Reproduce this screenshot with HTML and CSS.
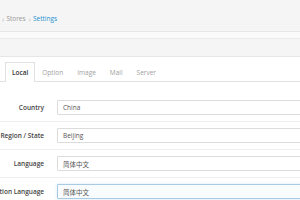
FILE: index.html
```html
<!DOCTYPE html>
<html lang="en">
<head>
    <meta charset="UTF-8">
    <title>Settings</title>
    <link rel="stylesheet" href="styles.css">
</head>
<body>
    <div class="page-header">
        <ul class="breadcrumb">
            <li><span class="sep">›</span><a href="#">Stores</a></li>
            <li><span class="sep">›</span><a href="#" class="current">Settings</a></li>
        </ul>
    </div>
    <div class="spacer"></div>
    <div class="panel-heading"></div>

    <div class="panel-body">
        <ul class="nav-tabs">
            <li class="active"><a href="#">Local</a></li>
            <li><a href="#">Option</a></li>
            <li><a href="#">Image</a></li>
            <li><a href="#">Mail</a></li>
            <li><a href="#">Server</a></li>
        </ul>

        <div class="tab-content">
            <div class="form-group">
                <div class="label"><span>Country</span></div>
                <input class="form-control" type="text" value="China">
            </div>
            <div class="form-group">
                <div class="label"><span>Region / State</span></div>
                <input class="form-control" type="text" value="Beijing">
            </div>
            <div class="form-group">
                <div class="label"><span>Language</span></div>
                <input class="form-control" type="text" value="简体中文">
            </div>
            <div class="form-group">
                <div class="label"><span>Administration Language</span></div>
                <input class="form-control focus" type="text" value="简体中文">
            </div>
        </div>
    </div>
</body>
</html>
```

FILE: styles.css
```css
/* General Styles */
body {
    font-family: "Open Sans", "Noto Sans CJK SC", sans-serif;
    font-size: 6.5px;
    margin: 0;
    padding: 0;
    background-color: #fff;
    overflow: hidden;
}
a {
    text-decoration: none;
}

/* Page header */
.page-header {
    height: 32px;
    background-color: #f5f5f5;
    border-bottom: 1px solid #e6e6e6;
    display: flex;
    align-items: center;
    padding-top: 6px;
    box-sizing: border-box;
}
.breadcrumb {
    list-style: none;
    display: flex;
    margin: 0;
    padding: 0 0 0 2px;
}
.breadcrumb li {
    display: flex;
    align-items: center;
    margin-right: 3px;
}
.breadcrumb .sep {
    color: #bbb;
    margin-right: 2px;
    font-size: 8px;
}
.breadcrumb a {
    color: #999;
}
.breadcrumb a.current {
    color: #1e91cf;
}
.spacer {
    height: 6px;
    background-color: #fafafa;
}
.panel-heading {
    height: 17px;
    background-color: #f5f5f5;
    border-top: 1px solid #ececec;
    border-bottom: 1px solid #e6e6e6;
}

/* Panel */
.panel-body {
    padding: 5px 0 0 0;
}
.nav-tabs {
    list-style: none;
    display: flex;
    margin: 0;
    padding: 0 0 0 5px;
    height: 19px;
    border-bottom: 1px solid #e2e2e2;
}
.nav-tabs a {
    display: block;
    height: 19px;
    line-height: 19px;
    padding: 0 6px;
    color: #a0a0a0;
    border: 1px solid transparent;
    border-bottom: none;
    box-sizing: border-box;
}
.nav-tabs li.active a {
    color: #333;
    font-weight: 600;
    background: #fff;
    border-color: #e2e2e2;
    height: 20px;
}

/* Form */
.tab-content {
    padding-top: 12px;
}
.form-group {
    display: flex;
    align-items: center;
    padding: 6px 0;
}
.form-group + .form-group {
    border-top: 1px solid #efefef;
}
.label {
    width: 44px;
    flex-shrink: 0;
    display: flex;
    justify-content: flex-end;
    white-space: nowrap;
    font-weight: 600;
    color: #444;
    margin-right: 13px;
}
.form-control {
    width: 280px;
    flex-shrink: 0;
    height: 15px;
    box-sizing: border-box;
    padding: 0 5px;
    margin: 0;
    font-family: "Open Sans", "Noto Sans CJK SC", sans-serif;
    font-size: 6.5px;
    color: #555;
    border: 1px solid #dcdcdc;
    border-radius: 1px;
    background: #fff;
    outline: none;
}
.form-control.focus {
    border-color: #a8cbe3;
    background: #f9fcfe;
    box-shadow: 0 0 3px rgba(102, 175, 233, 0.3);
}
```
